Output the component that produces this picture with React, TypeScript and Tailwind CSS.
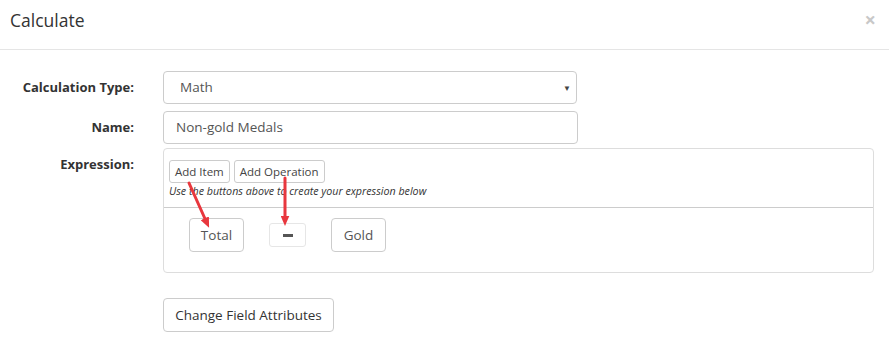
import React from "react";

const font = { fontFamily: '"Open Sans", "Noto Sans", sans-serif' };

export default function App() {
  return (
    <div className="relative w-[889px] h-[346px] bg-white text-[#333] overflow-hidden" style={font}>
      <div className="h-[50px] border-b border-[#e5e5e5] flex items-center justify-between pl-[10px] pr-[13px]">
        <h4 className="text-[17.5px] leading-none text-[#333] font-medium -mt-[7px]">Calculate</h4>
        <span className="text-[20px] leading-none text-[#c8c8c8] -mt-[10px] font-bold">×</span>
      </div>

      <div className="pt-[21px] flex flex-col gap-[7px]">
        <div className="flex items-center">
          <label className="w-[134px] text-right text-[13px] font-bold">Calculation Type:</label>
          <div className="ml-[29px] w-[414px] h-[33px] border border-[#ccc] rounded-[4px] flex items-center justify-between pl-[16px] pr-[5px] text-[13.5px] text-[#555]">
            <span>Math</span>
            <span className="text-[8px] text-[#444]">▼</span>
          </div>
        </div>
        <div className="flex items-center">
          <label className="w-[134px] text-right text-[13px] font-bold">Name:</label>
          <div className="ml-[29px] w-[415px] h-[33px] border border-[#ccc] rounded-[4px] flex items-center pl-[12px] text-[13.5px] text-[#555]">
            Non-gold Medals
          </div>
        </div>
        <div className="flex items-start -mt-[3px]">
          <label className="w-[134px] text-right text-[13px] font-bold pt-[7px]">Expression:</label>
          <div className="ml-[29px] w-[711px] h-[125px] border border-[#ddd] rounded-[4px] flex flex-col">
            <div className="h-[59px] border-b border-[#ccc] pl-[5px] pt-[11px]">
              <div className="flex gap-[4px]">
                <span className="h-[23px] px-[5px] border border-[#ccc] rounded-[3px] text-[11.5px] leading-[21px] text-[#444]">Add Item</span>
                <span className="h-[23px] px-[5px] border border-[#ccc] rounded-[3px] text-[11.5px] leading-[21px] text-[#444]">Add Operation</span>
              </div>
              <div className="text-[10.7px] italic leading-[14px] mt-[1px] text-[#333]">Use the buttons above to create your expression below</div>
            </div>
            <div className="flex items-center gap-[25px] pl-[25px] pt-[10px]">
              <span className="h-[34px] w-[55px] border border-[#ccc] rounded-[4px] flex items-center justify-center text-[13.5px] text-[#555]">Total</span>
              <span className="h-[24px] w-[37px] border border-[#e6e6e6] rounded-[3px] flex items-center justify-center">
                <span className="block w-[10px] h-[3px] bg-[#555]"></span>
              </span>
              <span className="h-[34px] w-[55px] border border-[#ccc] rounded-[4px] flex items-center justify-center text-[13.5px] text-[#555]">Gold</span>
            </div>
          </div>
        </div>
        <div className="pl-[163px] pt-[18px]">
          <span className="inline-flex h-[34px] w-[171px] items-center justify-center border border-[#ccc] rounded-[4px] text-[13.5px] text-[#333]">Change Field Attributes</span>
        </div>
      </div>

      <svg className="absolute left-0 top-0 pointer-events-none" width="889" height="346">
        <defs>
          <marker id="ah" markerWidth="3.5" markerHeight="3" refX="1" refY="1.5" orient="auto" markerUnits="strokeWidth">
            <path d="M0,0 L3.5,1.5 L0,3 z" fill="#e8373e" />
          </marker>
        </defs>
        <line x1="189" y1="183" x2="206" y2="221" stroke="#e8373e" strokeWidth="3" strokeLinecap="round" markerEnd="url(#ah)" />
        <line x1="285" y1="178" x2="285" y2="218.5" stroke="#e8373e" strokeWidth="3" strokeLinecap="round" markerEnd="url(#ah)" />
      </svg>
    </div>
  );
}
